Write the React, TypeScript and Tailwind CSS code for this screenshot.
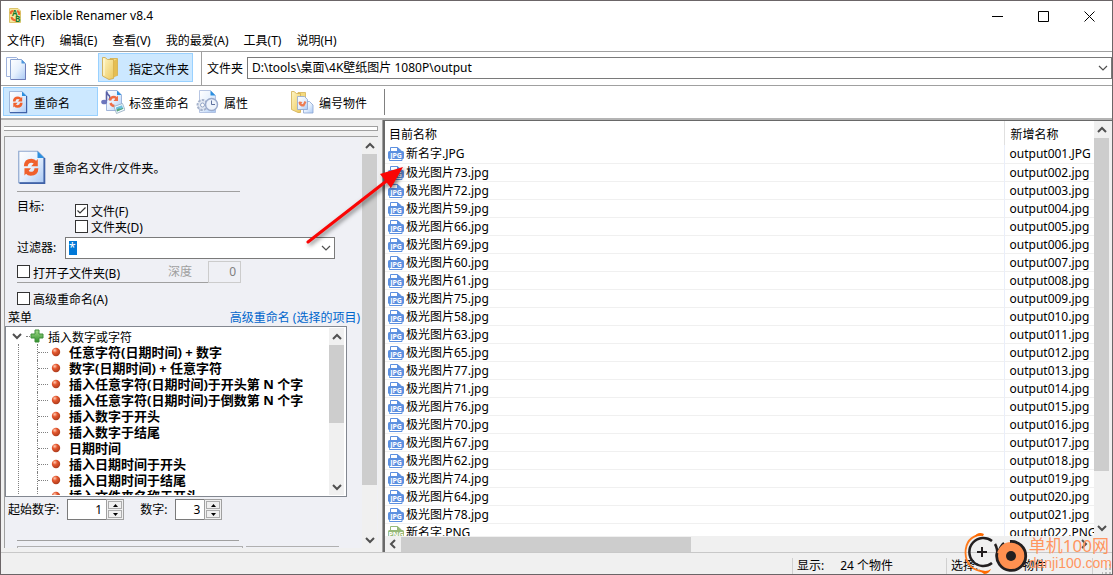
import { useState } from 'react';
import type { ReactNode } from 'react';

const files = [
  '新名字.JPG', '极光图片73.jpg', '极光图片72.jpg', '极光图片59.jpg', '极光图片66.jpg', '极光图片69.jpg',
  '极光图片60.jpg', '极光图片61.jpg', '极光图片75.jpg', '极光图片58.jpg', '极光图片63.jpg', '极光图片65.jpg',
  '极光图片77.jpg', '极光图片71.jpg', '极光图片76.jpg', '极光图片70.jpg', '极光图片67.jpg', '极光图片62.jpg',
  '极光图片74.jpg', '极光图片64.jpg', '极光图片78.jpg', '新名字.PNG',
];

const menuItems = [
  '任意字符(日期时间) + 数字',
  '数字(日期时间) + 任意字符',
  '插入任意字符(日期时间)于开头第 N 个字',
  '插入任意字符(日期时间)于倒数第 N 个字',
  '插入数字于开头',
  '插入数字于结尾',
  '日期时间',
  '插入日期时间于开头',
  '插入日期时间于结尾',
  '插入文件夹名称于开头',
];

const menus = ['文件(F)', '编辑(E)', '查看(V)', '我的最爱(A)', '工具(T)', '说明(H)'];

const newName = (name: string, i: number) =>
  `output${String(i + 1).padStart(3, '0')}${name.slice(name.lastIndexOf('.'))}`;

function Gradients() {
  return (
    <svg width="0" height="0" className="absolute">
      <defs>
        <linearGradient id="paper" x1="0" y1="0" x2="1" y2="1">
          <stop offset="0" stopColor="#ffffff" />
          <stop offset="0.5" stopColor="#e6f0fd" />
          <stop offset="1" stopColor="#a9c9f5" />
        </linearGradient>
        <linearGradient id="gold" x1="0" y1="0" x2="1" y2="1">
          <stop offset="0" stopColor="#fff6c4" />
          <stop offset="1" stopColor="#ecc95f" />
        </linearGradient>
        <radialGradient id="ball" cx="0.35" cy="0.3" r="0.75">
          <stop offset="0" stopColor="#ffc9b0" />
          <stop offset="0.4" stopColor="#e4572e" />
          <stop offset="1" stopColor="#a83a1c" />
        </radialGradient>
        <linearGradient id="plus" x1="0" y1="0" x2="0" y2="1">
          <stop offset="0" stopColor="#a4dc8c" />
          <stop offset="1" stopColor="#2f8f2b" />
        </linearGradient>
      </defs>
    </svg>
  );
}

function RenameIcon({ className = 'h-6 w-6' }: { className?: string }) {
  return (
    <svg viewBox="3 0 18 24" className={className}>
      <path d="M3.500 1.500H16L20.500 6V22.500H3.500z" fill="url(#paper)" stroke="#8fa8d0" strokeWidth="0.800" />
      <path d="M4 22.700H20.600V6" fill="none" stroke="#3f62a8" strokeWidth="1.200" />
      <path d="M16 1.500V6H20.500z" fill="#2b8fe0" />
      <g fill="none" stroke="#f0602c" strokeWidth="2.600">
        <path d="M8.200 11.500Q8.300 7.800 12 7.800Q13.500 7.800 14.500 9" />
        <path d="M15.300 12.800Q15.200 16.500 11.500 16.500Q10 16.500 9 15.300" />
        <path d="M16.200 6.700V11.500H11.800zM7.300 17.600V12.800H11.700z" fill="#f0602c" stroke="none" />
      </g>
    </svg>
  );
}

function FilesIcon() {
  return (
    <svg viewBox="0 0 24 24" className="h-6 w-6">
      <path d="M0.500 1.500H10.500L14.500 5.500V20.500H0.500z" fill="#fbfdff" stroke="#9fb2dc" />
      <path d="M4.500 3.500H15.500L19.500 7.500V23.500H4.500z" fill="url(#paper)" stroke="#8ca4d2" />
      <path d="M5 23.500H19.500V8" fill="none" stroke="#6f7db8" />
      <path d="M15.500 3.500V7.500H19.500z" fill="#4d97de" />
    </svg>
  );
}

function FolderIcon() {
  return (
    <svg viewBox="0 0 24 24" className="h-6 w-6">
      <path d="M9 2.500H16.500V19.500L9 21z" fill="#f4da7e" stroke="#d0ab48" strokeWidth="0.800" />
      <path d="M1.500 1.500H4L6.500 3.500H12.500V22.500L8 23.500L1.500 20z" fill="url(#gold)" stroke="#cba548" strokeWidth="0.800" />
      <path d="M3 3V19.500" stroke="#fffbe0" />
      <path d="M12.500 5L16 3V19L12.500 22z" fill="#e5be52" />
    </svg>
  );
}

function TagRenameIcon() {
  return (
    <svg viewBox="0 0 24 24" className="h-6 w-6">
      <path d="M5.500 0.500H16L20.500 5V20.500H5.500z" fill="url(#paper)" stroke="#8ca4d2" strokeWidth="0.800" />
      <path d="M16 0.500V5H20.500z" fill="#2b8fe0" />
      <path d="M5.500 11V1.500Q6.500 4.500 8.500 6Q9.500 8 8 10" fill="none" stroke="#5a62a8" strokeWidth="1.600" />
      <ellipse cx="3.200" cy="12" rx="3" ry="2.300" fill="#6c76bd" />
      <g fill="none" stroke="#ef6c44" strokeWidth="2.400">
        <path d="M9 10.500Q9.500 7 13 7Q14.500 7 15.500 8.500M9.500 13Q10.500 16 13.500 16" />
        <path d="M17 5.500V11H12.500z" fill="#ef6c44" stroke="none" />
      </g>
      <path d="M13 16.500L21.500 13.500L24 20L15.500 23.500z" fill="#f4fbff" stroke="#92a9bf" strokeWidth="0.800" />
      <path d="M14.800 17.500L21 15.200L22.300 18.800L16 21.500z" fill="#6cc0de" />
      <path d="M15.500 19.800L18 18.300L19.500 19L22 17.800L22.300 18.800L16 21.500z" fill="#5aa575" />
    </svg>
  );
}

function PropertiesIcon() {
  return (
    <svg viewBox="0 0 24 24" className="h-6 w-6">
      <path d="M3.500 0.500H14.500L19.500 5.500V22.500H3.500z" fill="url(#paper)" stroke="#a6b8dc" strokeWidth="0.800" />
      <path d="M14.500 0.500V5.500H19.500z" fill="#2b8fe0" />
      <circle cx="6.500" cy="15" r="5" fill="#e3e9f3" stroke="#a6b3cc" strokeWidth="2" strokeDasharray="2.500 1.200" />
      <circle cx="6.500" cy="15" r="2" fill="#ffffff" stroke="#94a5c6" />
      <circle cx="15.500" cy="14.500" r="6" fill="#eef3fb" stroke="#9aaacb" strokeWidth="1.500" />
      <path d="M15.500 10.500V14.500H19" fill="none" stroke="#5f719e" />
    </svg>
  );
}

function NumberIcon() {
  return (
    <svg viewBox="0 0 24 24" className="h-6 w-6">
      <path d="M7 2.500H14.500V19L7 20z" fill="#f4da7e" stroke="#d6b356" strokeWidth="0.800" />
      <path d="M0.500 1.500H3L5.500 3.500H9.500V22.500H7L0.500 19.500z" fill="url(#gold)" stroke="#d0ad50" strokeWidth="0.800" />
      <path d="M12.500 11.500H18.500L22 15V23H12.500z" fill="url(#paper)" stroke="#8ca4d2" strokeWidth="0.800" />
      <path d="M6.500 6.500H13.500L16.500 9.500V19.500H6.500z" fill="url(#paper)" stroke="#8ca4d2" strokeWidth="0.800" />
      <path d="M8.500 12Q9 15.500 12.500 15.500L14.500 11.500" fill="none" stroke="#ee7c52" strokeWidth="2.200" />
      <path d="M8 11.500L11.500 12L9 15z" fill="#ee7c52" />
    </svg>
  );
}

function AppIcon() {
  return (
    <svg viewBox="0 0 16 16" className="h-4 w-4">
      <path d="M1.500 0.500H10L12.500 3V14.500H1.500z" fill="#f6e7a0" stroke="#dcc56c" />
      <path d="M3 6Q2 3 5.500 3M9 3Q12 4 11 7M3.500 9Q4 12 8 12.500" fill="none" stroke="#ef6a32" strokeWidth="2" />
      <text x="4" y="8" fontSize="8" fontWeight="700" fill="#177a2c">A</text>
      <text x="7" y="14" fontSize="8" fontWeight="700" fill="#177a2c">B</text>
    </svg>
  );
}

function FileTypeIcon({ type }: { type: string }) {
  const color = type === 'PNG' ? '#96b878' : '#5c90e0';
  return (
    <svg viewBox="0 0 16 16" className="h-4 w-4 shrink-0">
      <path d="M2.500 6V1.500H9.500L13.500 5V6" fill="#ffffff" stroke={color} />
      <path d="M9 1L14 5.500H9z" fill={color} />
      <rect x="0" y="5" width="16" height="8" rx="1.500" fill={color} />
      <path d="M1.500 13V14.500H14V13" fill="none" stroke={color} />
      <text x="8" y="12" textAnchor="middle" fontSize="7" fontWeight="700" fill="#ffffff">{type}</text>
    </svg>
  );
}

function Chevron({ dir, thin = false }: { dir: 'up' | 'down' | 'left' | 'right'; thin?: boolean }) {
  const paths = {
    up: 'M1 7L5 3L9 7',
    down: 'M1 3L5 7L9 3',
    left: 'M7 1L3 5L7 9',
    right: 'M3 1L7 5L3 9',
  };
  return (
    <svg viewBox="0 0 10 10" className="h-2.5 w-2.5">
      <path d={paths[dir]} fill="none" stroke="#505050" strokeWidth={thin ? 1.2 : 2} />
    </svg>
  );
}

function ScrollBar({ thumb }: { thumb: string }) {
  return (
    <div className="flex w-[15px] shrink-0 flex-col bg-[#f0f0f0]">
      <button aria-label="向上" className="grid h-[17px] place-items-center"><Chevron dir="up" /></button>
      <div className="min-h-0 flex-1">
        <div className={`bg-[#cdcdcd] ${thumb}`} />
      </div>
      <button aria-label="向下" className="grid h-[17px] place-items-center"><Chevron dir="down" /></button>
    </div>
  );
}

function ToolButton({ icon, label, active }: { icon: ReactNode; label: string; active?: boolean }) {
  return (
    <button
      className={`flex h-[29px] w-[95px] items-center gap-1 border pl-0.5 whitespace-nowrap ${
        active ? 'border-[#99d1ff] bg-[#cce8ff]' : 'border-transparent'
      }`}
    >
      {icon}
      <span className="pt-1">{label}</span>
    </button>
  );
}

function CheckBox({ label, checked = false }: { label: string; checked?: boolean }) {
  const [on, setOn] = useState(checked);
  return (
    <label className="flex h-4 items-center gap-[3px]">
      <span className="relative h-[13px] w-[13px] shrink-0">
        <input
          type="checkbox"
          checked={on}
          onChange={(e) => setOn(e.target.checked)}
          className="block h-[13px] w-[13px] appearance-none border border-[#333333] bg-white"
        />
        {on && (
          <svg viewBox="0 0 13 13" className="pointer-events-none absolute inset-0">
            <path d="M2.500 6.500L5 9L10.500 3.500" fill="none" stroke="#333333" strokeWidth="1.200" />
          </svg>
        )}
      </span>
      <span className="pt-1">{label}</span>
    </label>
  );
}

function Spinner({ label, value, box }: { label: string; value: number; box: string }) {
  const [n, setN] = useState(value);
  return (
    <div className="flex items-center">
      <label className="flex items-center gap-2">
        {label}
        <input
          value={n}
          onChange={(e) => setN(Number(e.target.value) || 0)}
          className={`h-[21px] border border-r-0 border-[#7a7a7a] bg-white pr-1 text-right ${box}`}
        />
      </label>
      <div className="flex h-[21px] w-[18px] flex-col gap-px border border-[#a0a0a0] bg-[#f0f0f0] p-px">
        <button aria-label="增加" onClick={() => setN(n + 1)} className="grid flex-1 place-items-center border border-[#acacac]">
          <svg viewBox="0 0 5 3" className="h-[3px] w-[5px]"><path d="M0 3L2.500 0L5 3z" /></svg>
        </button>
        <button aria-label="减少" onClick={() => setN(n - 1)} className="grid flex-1 place-items-center border border-[#acacac]">
          <svg viewBox="0 0 5 3" className="h-[3px] w-[5px]"><path d="M0 0L2.500 3L5 0z" /></svg>
        </button>
      </div>
    </div>
  );
}

function MenuTree() {
  return (
    <div className="flex h-[171px] w-[342px] border border-[#828790] bg-white py-px pr-0.5">
      <div className="min-w-0 flex-1 overflow-hidden">
        <div className="flex h-4 items-center pl-1.5">
          <Chevron dir="down" />
          <span className="ml-1 w-1 border-t border-dotted border-[#808080]" />
          <svg viewBox="0 0 14 14" className="h-3.5 w-3.5">
            <path d="M5 1H9V5H13V9H9V13H5V9H1V5H5z" fill="url(#plus)" stroke="#3f8f3b" />
          </svg>
          <span className="ml-1 pt-1">插入数字或字符</span>
        </div>
        <ul className="ml-3 border-l border-dotted border-[#808080] pl-[18px]">
          {menuItems.map((item) => (
            <li key={item} className="flex h-4 items-center border-l border-dotted border-[#808080] text-[13px] font-bold whitespace-nowrap">
              <span className="w-2.5 border-t border-dotted border-[#808080]" />
              <svg viewBox="0 0 10 10" className="ml-[3px] h-2.5 w-2.5"><circle cx="5" cy="5" r="4.200" fill="url(#ball)" /></svg>
              <span className="ml-2">{item}</span>
            </li>
          ))}
        </ul>
      </div>
      <ScrollBar thumb="h-[78px]" />
    </div>
  );
}

function OptionsPanel() {
  return (
    <aside className="flex w-[382px] shrink-0 flex-col border-r border-[#a0a0a0] bg-[#f0f0f0] pt-1.5 pr-1 pl-[3px]">
      <div className="h-[5px] shrink-0 border-y border-r border-[#a0a0a0] bg-white" />
      <div className="mt-[5px] mb-1 flex min-h-0 flex-1 border-t border-l border-[#a0a0a0] bg-[#eff0f5] pr-px">
        <div className="min-w-0 flex-1 overflow-hidden">
          <div className="px-3 pt-3">
            <div className="flex h-[43px] w-[223px] items-start gap-[7px] border-b border-[#a0a0a0]">
              <RenameIcon className="h-9 w-[29px]" />
              <span className="pt-3">重命名文件/文件夹。</span>
            </div>
            <div className="flex pt-[7px]">
              <span className="w-[58px]">目标:</span>
              <div className="pt-[3px]">
                <CheckBox label="文件(F)" checked />
                <CheckBox label="文件夹(D)" />
              </div>
            </div>
            <div className="mt-[3px] flex h-[22px] items-center">
              <label htmlFor="filter" className="w-12">过滤器:</label>
              <div className="flex h-[22px] w-[270px] items-center justify-between border border-[#7a7a7a] bg-white px-[3px]">
                <input id="filter" defaultValue="*" className="h-3.5 w-2 bg-[#0078d7] text-white" />
                <button aria-label="选择过滤器"><Chevron dir="down" thin /></button>
              </div>
            </div>
            <div className="mt-0.5 flex h-[22px] w-[224px] items-center justify-between border-b border-[#a0a0a0]">
              <CheckBox label="打开子文件夹(B)" />
              <label className="flex items-center gap-4 text-[#a0a0a0]">
                深度
                <input disabled defaultValue="0" className="h-[22px] w-[33px] border border-[#cccccc] pr-1 text-right text-[#808080]" />
              </label>
            </div>
            <div className="pt-[7px]">
              <CheckBox label="高级重命名(A)" />
            </div>
          </div>
          <div className="mt-0.5 flex h-[18px] items-end justify-between pr-0.5 pl-[3px] whitespace-nowrap">
            <span>菜单</span>
            <a href="#advanced" className="text-[#0066cc]">高级重命名 (选择的项目)</a>
          </div>
          <MenuTree />
          <div className="flex gap-4 pt-0.5 pl-[3px]">
            <Spinner label="起始数字:" value={1} box="w-[39px]" />
            <Spinner label="数字:" value={3} box="w-[29px]" />
          </div>
          <div className="mt-5 ml-3 w-[222px] border-t border-[#a0a0a0]" />
          <div className="mt-[5px] ml-3 flex gap-[3px]">
            <div className="h-4 w-[226px] border border-[#b0b0b0]" />
            <div className="h-4 w-[93px] border-t border-[#b0b0b0]" />
          </div>
        </div>
        <ScrollBar thumb="h-[331px]" />
      </div>
    </aside>
  );
}

function FileList() {
  return (
    <main className="flex min-w-0 flex-1 flex-col border-t border-l-2 border-[#696969] bg-white">
      <div className="flex min-h-0 flex-1">
        <div className="min-w-0 flex-1 overflow-hidden">
          <table className="w-full table-fixed border-collapse text-left">
            <thead>
              <tr className="h-6">
                <th className="px-1 pt-1 pb-0 font-normal">目前名称</th>
                <th className="w-[90px] border-l border-[#e0e0e0] pt-1 pb-0 pl-1.5 font-normal">新增名称</th>
              </tr>
            </thead>
            <tbody>
              {files.map((name, i) => (
                <tr key={name} className="h-[18px] border-b border-[#f0f0f0]">
                  <td className="p-0 pl-[3px]">
                    <div className="flex h-[17px] items-end gap-0.5">
                      <FileTypeIcon type={name.endsWith('PNG') ? 'PNG' : 'JPG'} />
                      {name}
                    </div>
                  </td>
                  <td className="border-l border-[#e9eefa] p-0 pl-[5px] leading-[17px]">{newName(name, i)}</td>
                </tr>
              ))}
            </tbody>
          </table>
        </div>
        <ScrollBar thumb="h-[333px]" />
        <div className="w-[3px] bg-[#f0f0f0]" />
      </div>
      <div className="flex h-4 shrink-0 items-center bg-[#f0f0f0]">
        <button aria-label="向左" className="grid w-4 place-items-center"><Chevron dir="left" /></button>
        <div className="h-[15px] flex-1"><div className="h-[15px] w-[290px] bg-[#cdcdcd]" /></div>
        <button aria-label="向右" className="grid w-4 place-items-center"><Chevron dir="right" /></button>
        <div className="w-5" />
      </div>
    </main>
  );
}

function SiteMark() {
  return (
    <div className="pointer-events-none absolute right-0 bottom-0 flex items-center gap-px text-[#ff9560]">
      <svg viewBox="0 0 64 42" className="h-[42px] w-16">
        <path d="M17 2.500Q1.500 5 1.500 21Q2 38 21 40" fill="none" stroke="#ff7a1c" strokeWidth="1.800" />
        <path d="M10 5Q14-1 20 2L19 4Q14 3 10 5zM14 37Q22 41 27 37Q25 42 20 42z" fill="#ff6a00" />
        <path d="M28 9A14 14 0 1 0 28 31" fill="none" stroke="#231f20" strokeWidth="2.500" />
        <path d="M31 12Q34 17 33 24Q36 14 40 11" fill="none" stroke="#231f20" strokeWidth="2.500" />
        <circle cx="47" cy="24" r="14" fill="#ff9050" />
        <path d="M46 9.500A14.500 14.500 0 1 1 33 21" fill="none" stroke="#231f20" strokeWidth="2.800" />
        <path d="M18 15V25M13 20H23" stroke="#231f20" strokeWidth="2" />
        <circle cx="47" cy="24" r="5" fill="#231f20" />
      </svg>
      <div className="whitespace-nowrap">
        <p className="text-[17px] leading-[20px]">单机100网</p>
        <p className="font-['Liberation_Sans'] text-sm leading-[15px]">danji100.com</p>
      </div>
    </div>
  );
}

export default function App() {
  return (
    <div className="relative flex h-screen flex-col overflow-hidden border border-[#6b6567] bg-white font-['Noto_Sans','Noto_Sans_CJK_SC',sans-serif] text-xs leading-4 text-black">
      <Gradients />
      <header className="flex h-[30px] shrink-0 items-center gap-1.5 pl-[7px]">
        <AppIcon />
        <h1 className="flex-1">Flexible Renamer v8.4</h1>
        <button aria-label="最小化" className="grid h-full w-[46px] place-items-center">
          <svg viewBox="0 0 11 11" className="h-[11px] w-[11px]"><path d="M0 5.500H11" stroke="#000" /></svg>
        </button>
        <button aria-label="最大化" className="-ml-1.5 grid h-full w-[46px] place-items-center">
          <svg viewBox="0 0 11 11" className="h-[11px] w-[11px]"><path d="M.5.5H10.500V10.500H.5z" fill="none" stroke="#000" /></svg>
        </button>
        <button aria-label="关闭" className="-ml-1.5 grid h-full w-[46px] place-items-center">
          <svg viewBox="0 0 11 11" className="h-[11px] w-[11px]"><path d="M.5.5L10.500 10.500M10.500.5L.5 10.500" stroke="#000" /></svg>
        </button>
      </header>
      <nav className="flex h-[21px] shrink-0 gap-[15px] border-b border-[#a0a0a0] pt-0.5 pl-1.5">
        {menus.map((m) => <button key={m} className="h-4">{m}</button>)}
      </nav>

      <div className="flex h-[34px] shrink-0 border-b border-[#a0a0a0]">
        <div className="flex w-[201px] border-r border-[#a0a0a0] pt-px pl-0.5">
          <ToolButton icon={<FilesIcon />} label="指定文件" />
          <ToolButton icon={<FolderIcon />} label="指定文件夹" active />
        </div>
        <label htmlFor="folder" className="px-1 pt-[9px] pl-[5px]">文件夹</label>
        <div className="relative mt-[5px] h-[22px] flex-1">
          <select id="folder" className="h-[22px] w-full appearance-none border border-[#7a7a7a] bg-white pl-1">
            <option>D:\tools\桌面\4K壁纸图片 1080P\output</option>
          </select>
          <span className="pointer-events-none absolute top-1.5 right-1"><Chevron dir="down" thin /></span>
        </div>
      </div>

      <div className="flex h-[34px] shrink-0 border-b-2 border-[#b4b4b4] pt-px pl-0.5">
        <ToolButton icon={<RenameIcon />} label="重命名" active />
        <ToolButton icon={<TagRenameIcon />} label="标签重命名" />
        <ToolButton icon={<PropertiesIcon />} label="属性" />
        <ToolButton icon={<NumberIcon />} label="编号物件" />
        <div className="mt-0.5 ml-px h-[26px] w-px bg-[#808080]" />
      </div>

      <div className="flex min-h-0 flex-1">
        <OptionsPanel />
        <FileList />
      </div>

      <footer className="flex h-[22px] shrink-0 items-center border-t border-[#c8c8c8] bg-[#f0f0f0] pt-1">
        <div className="flex-1" />
        <div className="flex w-[154px] gap-4 border-l border-[#d0d0d0] pl-1">
          <span>显示:</span>
          <span>24 个物件</span>
        </div>
        <div className="flex w-[146px] gap-11 border-l border-[#d0d0d0] pl-1">
          <span>选择:</span>
          <span>物件</span>
        </div>
        <div className="flex h-4 w-5 items-end justify-end border-l border-[#d0d0d0]">
          <svg viewBox="0 0 10 10" className="h-2.5 w-2.5">
            <path d="M7 0H9V2H7zM7 4H9V6H7zM3 4H5V6H3zM7 8H9V10H7zM3 8H5V10H3zM0 8H1V10H0z" fill="#bfbfbf" />
          </svg>
        </div>
      </footer>

      <svg viewBox="0 0 110 90" className="pointer-events-none absolute top-40 left-[300px] h-[90px] w-[110px] drop-shadow-[2px_2px_2px_rgba(0,0,0,0.5)]">
        <path d="M7 81L88 18" stroke="#fa0505" strokeWidth="3" strokeLinecap="round" />
        <path d="M102 6L90 27L79 13z" fill="#fa0505" />
      </svg>
      <SiteMark />
    </div>
  );
}
